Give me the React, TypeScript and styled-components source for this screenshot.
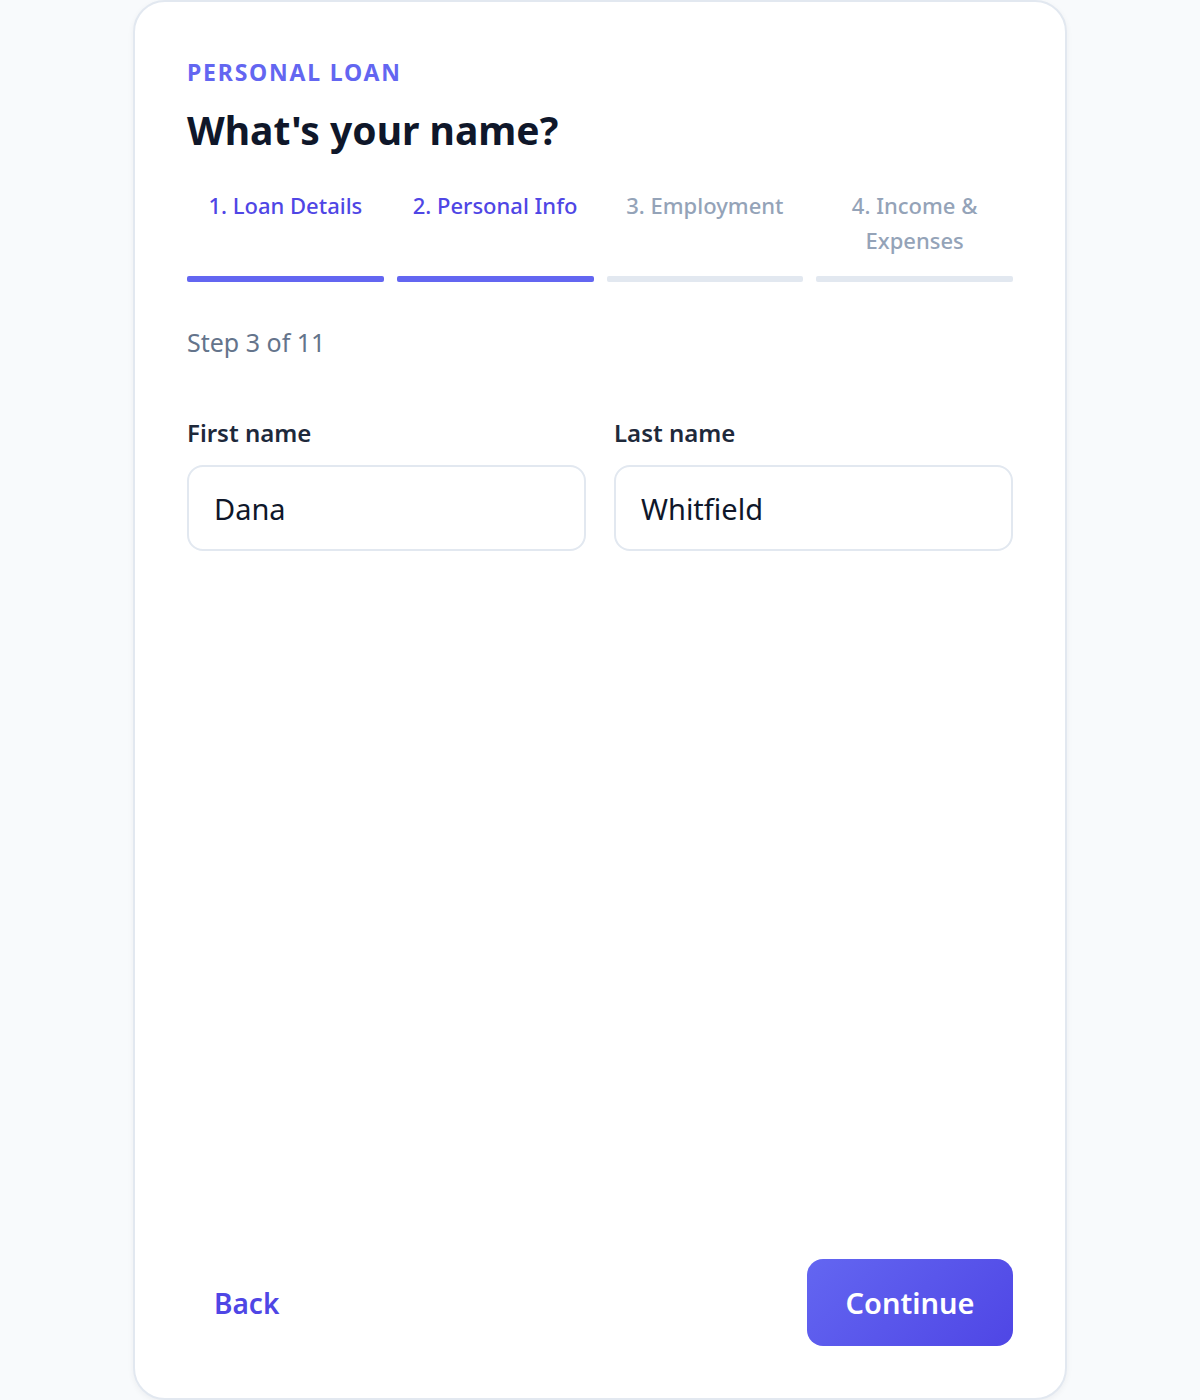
import React from "react";
import styled, { createGlobalStyle } from "styled-components";

const GlobalStyle = createGlobalStyle`
  * { box-sizing: border-box; }
  html, body {
    margin: 0;
    padding: 0;
    background: #f8fafc;
    font-family: "Noto Sans", "Open Sans", sans-serif;
  }
`;

const Page = styled.div`
  display: flex;
  justify-content: center;
  min-height: 1400px;
`;

const Card = styled.div`
  width: 934px;
  min-height: 1400px;
  display: flex;
  flex-direction: column;
  padding: 56px 52px 52px;
  background: #ffffff;
  border: 2px solid #e2e8f0;
  border-radius: 32px;
  box-shadow: 0 2px 6px rgba(15, 23, 42, 0.05);
`;

const Eyebrow = styled.div`
  font-size: 23px;
  font-weight: 700;
  letter-spacing: 1.8px;
  color: #6366f1;
  line-height: 28px;
`;

const Title = styled.h1`
  margin: 16px 0 0;
  font-size: 39px;
  font-weight: 700;
  color: #0f172a;
  line-height: 56px;
`;

const Tabs = styled.div`
  display: grid;
  grid-template-columns: repeat(4, minmax(0, 1fr));
  gap: 13px;
  margin-top: 30px;
`;

const Tab = styled.div`
  display: flex;
  flex-direction: column;
  justify-content: space-between;
  gap: 18px;
`;

const TabLabel = styled.div<{ $active: boolean }>`
  padding: 0 10px;
  text-align: center;
  font-size: 22px;
  line-height: 35px;
  font-weight: 500;
  color: ${(p) => (p.$active ? "#4f46e5" : "#94a3b8")};
`;

const TabBar = styled.div<{ $active: boolean }>`
  height: 6px;
  border-radius: 2px;
  background: ${(p) => (p.$active ? "#6366f1" : "#e2e8f0")};
`;

const StepText = styled.div`
  margin-top: 44px;
  font-size: 25px;
  line-height: 32px;
  color: #64748b;
`;

const Fields = styled.div`
  display: grid;
  grid-template-columns: repeat(2, minmax(0, 1fr));
  gap: 28px;
  margin-top: 60px;
`;

const Field = styled.label`
  display: flex;
  flex-direction: column;
  gap: 17px;
  min-width: 0;
`;

const FieldLabel = styled.span`
  font-size: 24px;
  font-weight: 600;
  line-height: 30px;
  color: #1e293b;
`;

const Input = styled.input`
  width: 100%;
  height: 86px;
  padding: 0 25px;
  border: 2px solid #e2e8f0;
  border-radius: 16px;
  background: #fff;
  font-family: inherit;
  font-size: 29px;
  color: #0f172a;
  outline: none;
`;

const Spacer = styled.div`
  flex: 1;
`;

const Footer = styled.div`
  display: flex;
  justify-content: space-between;
  align-items: center;
`;

const BackButton = styled.button`
  padding: 0 27px;
  height: 87px;
  border: none;
  background: transparent;
  font-family: inherit;
  font-size: 28px;
  font-weight: 600;
  color: #4f46e5;
  cursor: pointer;
`;

const ContinueButton = styled.button`
  width: 206px;
  height: 87px;
  border: none;
  border-radius: 16px;
  background: linear-gradient(135deg, #6366f1, #4f46e5);
  font-family: inherit;
  font-size: 29px;
  font-weight: 600;
  color: #ffffff;
  cursor: pointer;
`;

const steps = [
  { label: "1. Loan Details", done: true },
  { label: "2. Personal Info", done: true },
  { label: "3. Employment", done: false },
  { label: "4. Income & Expenses", done: false },
];

export default function App() {
  return (
    <>
      <GlobalStyle />
      <Page>
        <Card>
          <Eyebrow>PERSONAL LOAN</Eyebrow>
          <Title>What's your name?</Title>
          <Tabs>
            {steps.map((s) => (
              <Tab key={s.label}>
                <TabLabel $active={s.done}>{s.label}</TabLabel>
                <TabBar $active={s.done} />
              </Tab>
            ))}
          </Tabs>
          <StepText>Step 3 of 11</StepText>
          <Fields>
            <Field>
              <FieldLabel>First name</FieldLabel>
              <Input defaultValue="Dana" />
            </Field>
            <Field>
              <FieldLabel>Last name</FieldLabel>
              <Input defaultValue="Whitfield" />
            </Field>
          </Fields>
          <Spacer />
          <Footer>
            <BackButton>Back</BackButton>
            <ContinueButton>Continue</ContinueButton>
          </Footer>
        </Card>
      </Page>
    </>
  );
}
